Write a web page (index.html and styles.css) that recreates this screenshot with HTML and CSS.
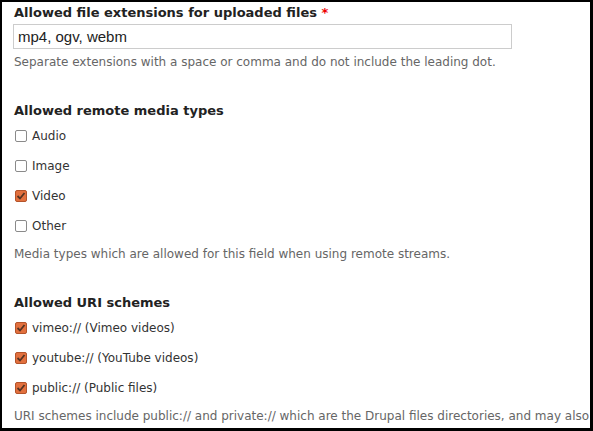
FILE: index.html
```html
<!DOCTYPE html>
<html lang="en">
<head>
    <meta charset="UTF-8" />
    <title>Media field settings</title>
    <link rel="stylesheet" href="styles.css">
</head>
<body>
    <div class="frame">

        <!-- File extensions -->
        <div class="form-item">
            <label class="form-label" for="extensions">Allowed file extensions for uploaded files <span class="required">*</span></label>
            <input type="text" id="extensions" class="form-text" value="mp4, ogv, webm" />
            <div class="description">Separate extensions with a space or comma and do not include the leading dot.</div>
        </div>

        <!-- Remote media types -->
        <div class="form-item">
            <div class="form-label group">Allowed remote media types</div>
            <div class="checkbox"><input type="checkbox" id="typeAudio" /><label for="typeAudio">Audio</label></div>
            <div class="checkbox"><input type="checkbox" id="typeImage" /><label for="typeImage">Image</label></div>
            <div class="checkbox"><input type="checkbox" id="typeVideo" checked /><label for="typeVideo">Video</label></div>
            <div class="checkbox"><input type="checkbox" id="typeOther" /><label for="typeOther">Other</label></div>
            <div class="description">Media types which are allowed for this field when using remote streams.</div>
        </div>

        <!-- URI schemes -->
        <div class="form-item">
            <div class="form-label group">Allowed URI schemes</div>
            <div class="checkbox"><input type="checkbox" id="schemeVimeo" checked /><label for="schemeVimeo">vimeo:// (Vimeo videos)</label></div>
            <div class="checkbox"><input type="checkbox" id="schemeYoutube" checked /><label for="schemeYoutube">youtube:// (YouTube videos)</label></div>
            <div class="checkbox"><input type="checkbox" id="schemePublic" checked /><label for="schemePublic">public:// (Public files)</label></div>
            <div class="description nowrap">URI schemes include public:// and private:// which are the Drupal files directories, and may also be used for remote streams.</div>
        </div>

    </div>
</body>
</html>
```

FILE: styles.css
```css
body {
    margin: 0;
    font-family: "DejaVu Sans", sans-serif;
    font-size: 12px;
    color: #333;
    background: #000;
}

.frame {
    box-sizing: border-box;
    width: 593px;
    height: 431px;
    border-style: solid;
    border-color: #000;
    border-width: 2px 3px 3px 2px;
    background: #fff;
    padding: 3px 12px 0 12px;
    overflow: hidden;
}

.form-item {
    margin-bottom: 34px;
}

.form-label {
    display: block;
    font-weight: bold;
    font-size: 13px;
    color: #222;
    margin-bottom: 4px;
}

.form-label.group {
    margin-bottom: 3px;
}

.required {
    color: #e00;
}

.form-text {
    box-sizing: border-box;
    width: 499px;
    height: 25px;
    margin: 0 0 0 -1px;
    padding: 2px 4px;
    border: 1px solid #ccc;
    font-family: "Liberation Sans", Arial, sans-serif;
    font-size: 15px;
    color: #222;
}

.description {
    margin-top: 6px;
    color: #666;
    font-size: 12px;
}

.nowrap {
    white-space: nowrap;
}

.checkbox {
    display: flex;
    align-items: center;
    height: 30px;
}

.checkbox label {
    color: #333;
}

.checkbox input {
    appearance: none;
    -webkit-appearance: none;
    box-sizing: border-box;
    width: 12px;
    height: 12px;
    margin: 0 5px 0 1px;
    border: 1px solid #8a8a8a;
    border-radius: 2px;
    background: #fff;
}

.checkbox input:checked {
    border-color: #b4532a;
    background: #e2703e url("data:image/svg+xml,%3Csvg xmlns='http://www.w3.org/2000/svg' width='10' height='10' viewBox='0 0 10 10'%3E%3Cpath d='M1.5 5 L4 7.5 L8.5 2' fill='none' stroke='%23553322' stroke-width='1.8'/%3E%3C/svg%3E") center / 10px 10px no-repeat;
}
```
